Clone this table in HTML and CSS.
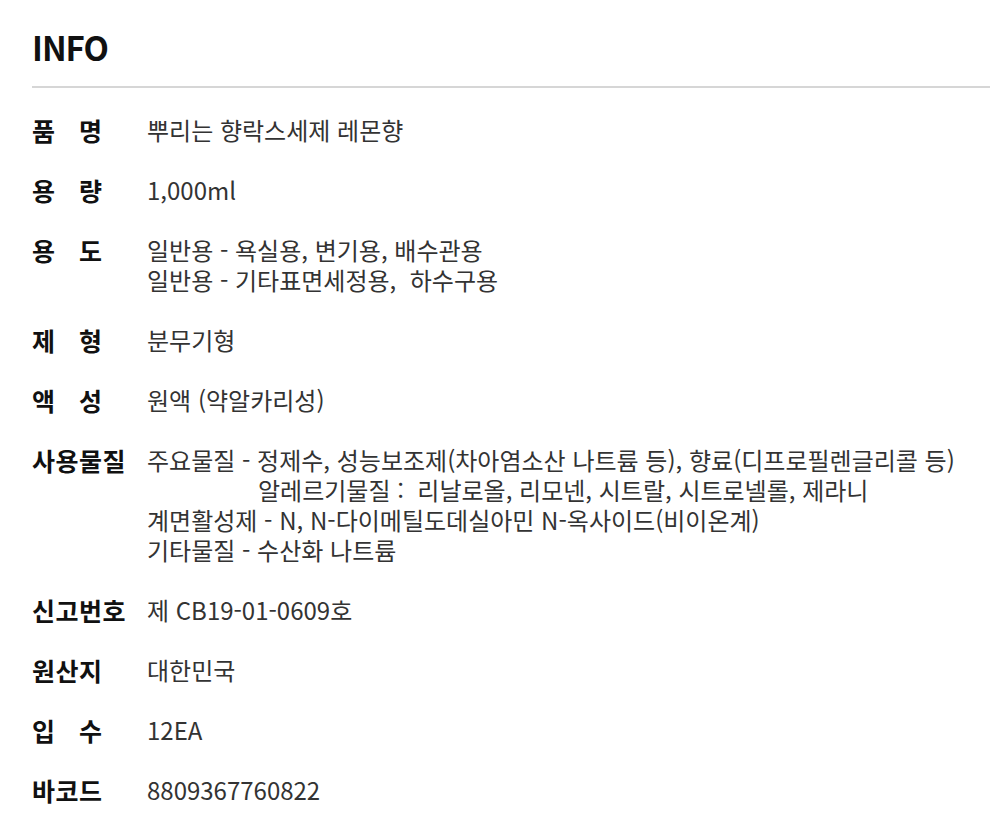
FILE: index.html
```html
<!DOCTYPE html>
<html lang="ko">
<head>
    <meta charset="UTF-8">
    <meta name="viewport" content="width=device-width, initial-scale=1.0">
    <title>INFO</title>
    <link rel="stylesheet" href="styles.css">
</head>
<body>
    <div class="info">
        <h1 class="info-title">INFO</h1>
        <dl class="info-list">
            <div class="info-row">
                <dt class="label label-wide"><span>품</span><span>명</span></dt>
                <dd class="value">뿌리는 향락스세제 레몬향</dd>
            </div>
            <div class="info-row">
                <dt class="label label-wide"><span>용</span><span>량</span></dt>
                <dd class="value">1,000ml</dd>
            </div>
            <div class="info-row">
                <dt class="label label-wide"><span>용</span><span>도</span></dt>
                <dd class="value">
                    <p>일반용 - 욕실용, 변기용, 배수관용</p>
                    <p>일반용 - 기타표면세정용,&nbsp; 하수구용</p>
                </dd>
            </div>
            <div class="info-row">
                <dt class="label label-wide"><span>제</span><span>형</span></dt>
                <dd class="value">분무기형</dd>
            </div>
            <div class="info-row">
                <dt class="label label-wide"><span>액</span><span>성</span></dt>
                <dd class="value">원액 (약알카리성)</dd>
            </div>
            <div class="info-row">
                <dt class="label">사용물질</dt>
                <dd class="value">
                    <p>주요물질 - 정제수, 성능보조제(차아염소산 나트륨 등), 향료(디프로필렌글리콜 등)</p>
                    <p class="indent">알레르기물질 :&nbsp; 리날로올, 리모넨, 시트랄, 시트로넬롤, 제라니</p>
                    <p>계면활성제 - N, N-다이메틸도데실아민 N-옥사이드(비이온계)</p>
                    <p>기타물질 - 수산화 나트륨</p>
                </dd>
            </div>
            <div class="info-row">
                <dt class="label">신고번호</dt>
                <dd class="value">제 CB19-01-0609호</dd>
            </div>
            <div class="info-row">
                <dt class="label">원산지</dt>
                <dd class="value">대한민국</dd>
            </div>
            <div class="info-row">
                <dt class="label label-wide"><span>입</span><span>수</span></dt>
                <dd class="value">12EA</dd>
            </div>
            <div class="info-row">
                <dt class="label">바코드</dt>
                <dd class="value">8809367760822</dd>
            </div>
        </dl>
    </div>
</body>
</html>
```

FILE: styles.css
```css
body {
    margin: 0;
    padding: 0;
    background: #ffffff;
    color: #333;
    font-family: "Noto Sans CJK KR", "Noto Sans", sans-serif;
}
.info {
    padding: 24px 0 0 32px;
}
.info-title {
    margin: 0;
    font-size: 33px;
    line-height: 46px;
    font-weight: bold;
    color: #111;
    letter-spacing: -1px;
}
.info-list {
    margin: 16px 0 0;
    padding: 27px 0 0;
    border-top: 2px solid #d6d6d6;
}
.info-row {
    display: flex;
    margin-bottom: 30px;
}
.label {
    width: 115px;
    flex-shrink: 0;
    font-size: 25px;
    line-height: 30px;
    font-weight: bold;
    color: #111;
    letter-spacing: 0.5px;
}
.label-wide {
    display: flex;
    justify-content: space-between;
    width: 70px;
    margin-right: 45px;
    letter-spacing: 0;
}
.value {
    margin: 0;
    font-size: 24px;
    line-height: 30px;
    color: #333;
}
.value p {
    margin: 0;
}
.value .indent {
    padding-left: 111px;
}
```
